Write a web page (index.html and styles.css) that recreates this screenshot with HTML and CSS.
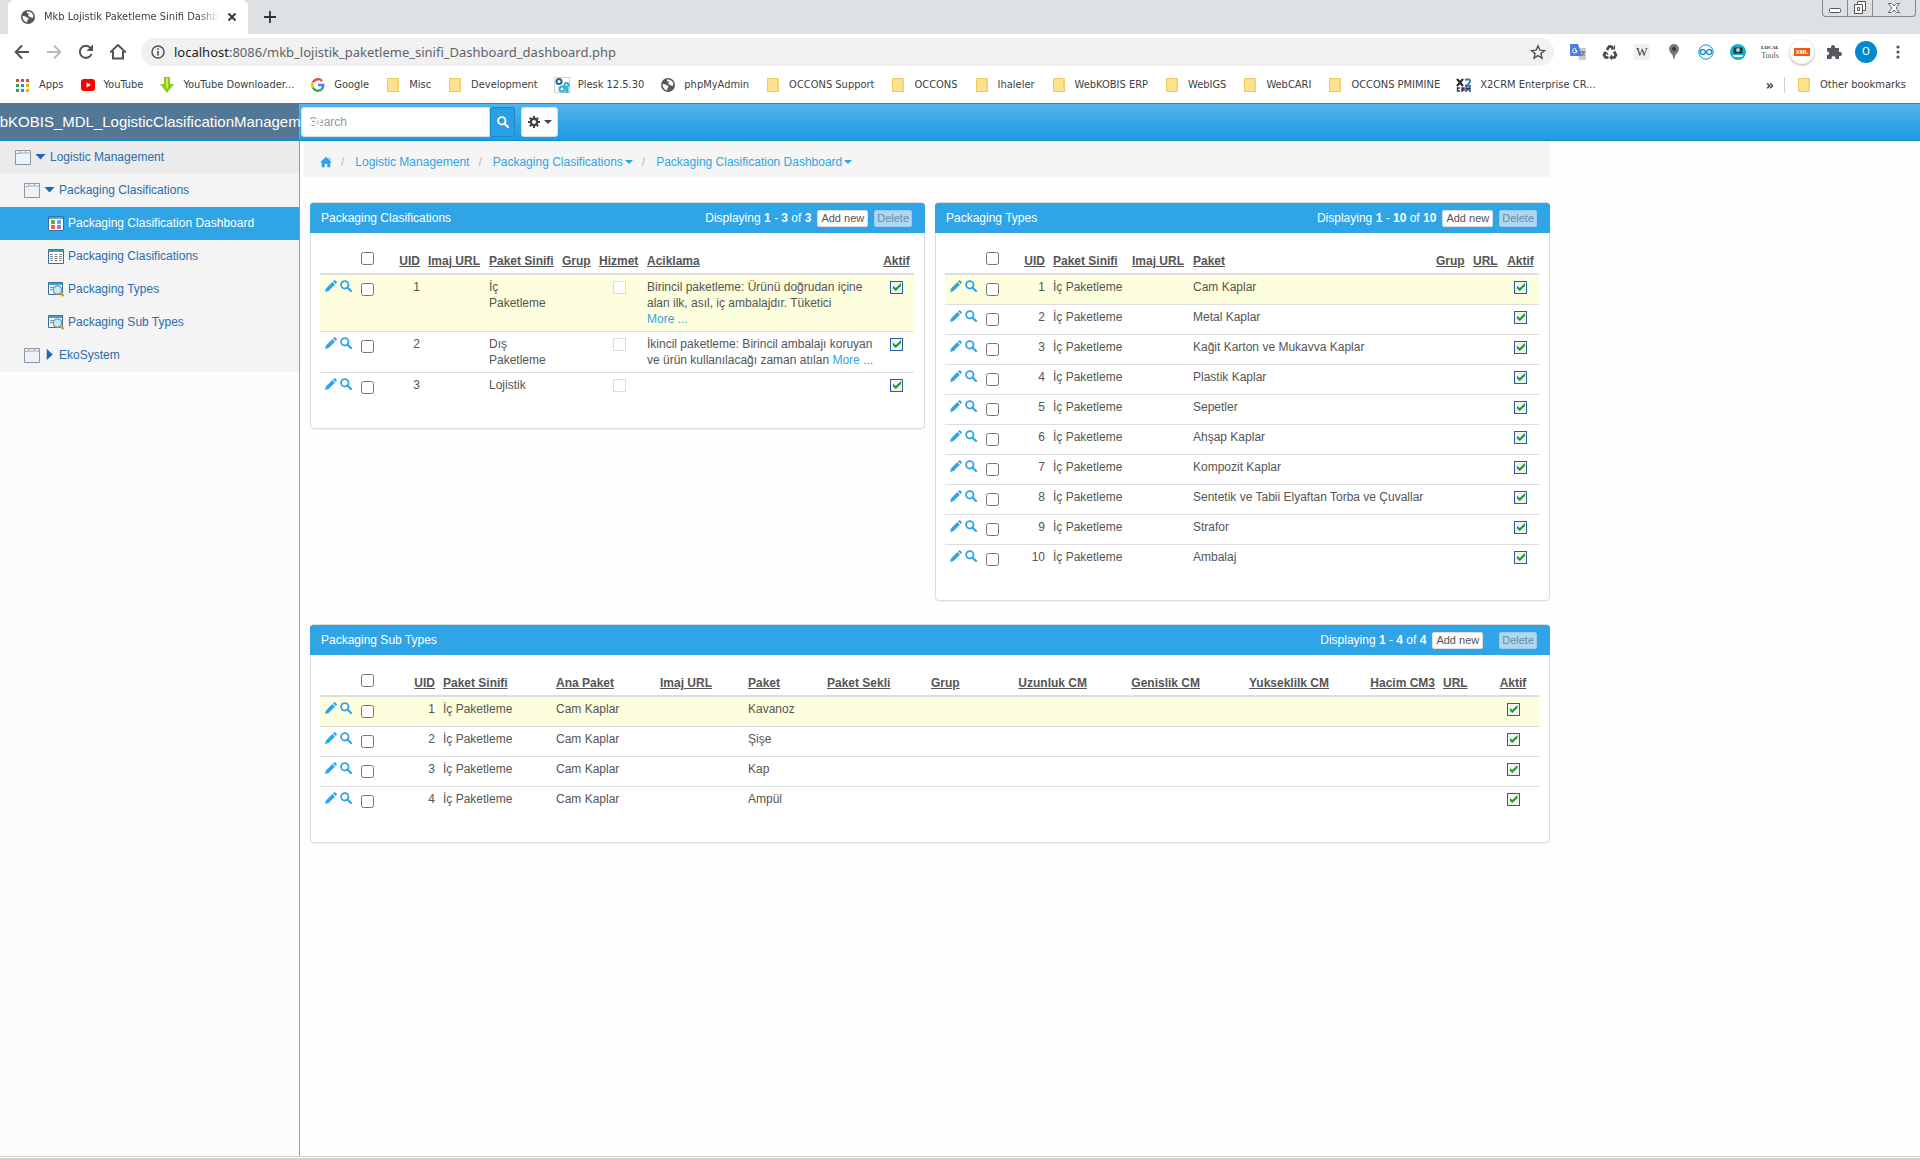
FILE: index.html
```html
<!DOCTYPE html>
<html lang="en">
<head>
<meta charset="utf-8">
<title>Mkb Lojistik Paketleme Sinifi Dashboard</title>
<link rel="stylesheet" href="styles.css">
</head>
<body>
<svg class="sprite" aria-hidden="true">
  <symbol id="pencil" viewBox="0 0 12 12"><path d="M0 12l1-3.600 6.300-6.300 2.600 2.600-6.300 6.300zM8 1.400l1-1q.6-.6 1.200 0l1.400 1.400q.6.600 0 1.200l-1 1z"/></symbol>
  <symbol id="search" viewBox="0 0 12 12"><circle cx="4.800" cy="4.800" r="3.700" fill="none" stroke="currentColor" stroke-width="1.800"/><path d="M7.500 7.500L11 11" stroke="currentColor" stroke-width="2.200" stroke-linecap="round"/></symbol>
  <symbol id="folder" viewBox="0 0 16 16"><path d="M2 1h12v14H2z" fill="#fbe38e"/><path d="M2.500 1.500h11v13h-11z" fill="none" stroke="#ecca62"/><path d="M12 1v10l2 3V1z" fill="#f3d269"/></symbol>
  <symbol id="globe" viewBox="0 0 16 16"><circle cx="8" cy="8" r="7" fill="#55585c"/><path d="M2.500 7q3-.5 4.500 1.500l1.500.5q.5 1-1 2l-.5 2.500Q2.500 12 2.500 7zM7 2.500q5-.5 6.500 4.500l-1 2-2.500-1-2-1.500 1.500-2H7z" fill="#fff"/></symbol>
  <symbol id="page" viewBox="0 0 16 16"><path d="M.5 1.500h15v14H.5z" fill="#edf2f7" stroke="#8b95a3"/><path d="M4.500 1v3h11M10.500 1v3M0 4.500h4.500" fill="none" stroke="#a3acb8"/></symbol>
  <symbol id="dash" viewBox="0 0 16 16"><path d="M.5 1.500h15v14H.5z" fill="#fff" stroke="#396f9c"/><path d="M1 2h14v2H1z" fill="#5ba3d5"/><path d="M3 5h4v4H3z" fill="#7aa82c"/><path d="M9 5h4v4H9z" fill="#69a7d8"/><path d="M3 10h4v4H3z" fill="#e8663c"/><path d="M9 10h4v4H9z" fill="#a677cf"/></symbol>
  <symbol id="grid" viewBox="0 0 16 16"><path d="M.5 1.500h15v14H.5z" fill="#fff" stroke="#396f9c"/><path d="M1 2h14v2H1z" fill="#45a0cd"/><path d="M2 6.500h3m1.500 0h3m1.500 0h3M2 8.500h3m1.500 0h3m1.500 0h3M2 10.500h3m1.500 0h3m1.500 0h3M2 12.500h3m1.500 0h3m1.500 0h3" stroke="#8a8f94"/></symbol>
  <symbol id="lens" viewBox="0 0 16 16"><path d="M.5 1.500h14v12H.5z" fill="#f2f5f7" stroke="#396f9c"/><path d="M1 2h13v2H1z" fill="#45a0cd"/><path d="M2 6.500h4M2 8.500h3" stroke="#8a8f94"/><circle cx="9.500" cy="9" r="4.200" fill="#c4e9f4" stroke="#7f99a8" stroke-width="1.200"/><path d="M13 12.500l2.500 2.500" stroke="#e39a24" stroke-width="2.500"/></symbol>
</svg>

<header class="browser">
  <div class="tabs">
    <div class="tab"><svg class="i16"><use href="#globe"/></svg><span class="tab-title">Mkb Lojistik Paketleme Sinifi Dashboard</span>
      <button class="bare" aria-label="Close tab"><svg width="10" height="10" viewBox="0 0 10 10"><path d="M1.500 1.500l7 7m0-7l-7 7" stroke="#333" stroke-width="1.800"/></svg></button></div>
    <button class="bare plus" aria-label="New tab"><svg width="12" height="12" viewBox="0 0 12 12"><path d="M6 0v12M0 6h12" stroke="#333" stroke-width="1.800"/></svg></button>
    <div class="win">
      <button aria-label="Minimize"><svg width="14" height="14" viewBox="0 0 14 14"><rect x="1.500" y="7.500" width="11" height="4" rx="1" fill="#fff" stroke="#555"/></svg></button>
      <button aria-label="Restore"><svg width="14" height="14" viewBox="0 0 14 14" fill="#fff" stroke="#555"><path d="M4.500.5h8v9h-8z"/><path d="M1.500 3.500h8v9h-8zM4.500 6.500h2v3h-2z"/></svg></button>
      <button class="wide" aria-label="Close"><svg width="14" height="14" viewBox="0 0 14 14"><path d="M1.500 2.500h3L7 5l2.500-2.500h3L9 7l3.500 4.500h-3L7 9l-2.500 2.500h-3L5 7z" fill="#fff" stroke="#666"/></svg></button>
    </div>
  </div>
  <div class="toolbar">
    <nav class="navbtns">
      <button class="bare" aria-label="Back"><svg width="16" height="16" viewBox="0 0 16 16" fill="none" stroke="#505357" stroke-width="2"><path d="M15 8H2m6-6.500L1.700 8 8 14.500"/></svg></button>
      <button class="bare" aria-label="Forward"><svg width="16" height="16" viewBox="0 0 16 16" fill="none" stroke="#b9bbbe" stroke-width="2"><path d="M1 8h13M8 1.500L14.300 8 8 14.500"/></svg></button>
      <button class="bare" aria-label="Reload"><svg width="16" height="16" viewBox="0 0 16 16"><path d="M13.500 10A6 6 0 1 1 12.500 4" fill="none" stroke="#505357" stroke-width="2"/><path d="M15 .5V7H8.500z" fill="#505357"/></svg></button>
      <button class="bare" aria-label="Home"><svg width="16" height="16" viewBox="0 0 16 16" fill="none" stroke="#505357" stroke-width="2"><path d="M0 8.500L8 1l8 7.500M3 7v7.500h10V7"/></svg></button>
    </nav>
    <div class="omnibox">
      <svg width="14" height="14" viewBox="0 0 14 14"><circle cx="7" cy="7" r="6" fill="none" stroke="#505357" stroke-width="1.500"/><path d="M7 6v4.500M7 3.300v1.500" stroke="#505357" stroke-width="1.600"/></svg>
      <span class="url"><b>localhost</b>:8086/mkb_lojistik_paketleme_sinifi_Dashboard_dashboard.php</span>
      <button class="bare" aria-label="Bookmark"><svg width="16" height="16" viewBox="0 0 16 16"><path d="M8 1.800l1.800 4.300 4.700.4-3.600 3.100 1.100 4.600L8 11.700l-4 2.500 1.100-4.600L1.500 6.500l4.700-.4z" fill="none" stroke="#505357" stroke-width="1.400"/></svg></button>
    </div>
    <div class="exts">
      <svg class="i16" viewBox="0 0 16 16"><path d="M7 4h9v12H9z" fill="#c8cbce"/><path d="M0 0h8l4 12H1q-1 0-1-1z" fill="#4b7fe6"/><path d="M7 7a2.200 2.200 0 1 1-.8-2M5 6.500h2.200" fill="none" stroke="#fff"/><path d="M10 8h5m-2.500-1v1q1 3 2 4m0-4q-1 3-3 4" stroke="#6c7076" fill="none"/></svg>
      <svg class="i16" viewBox="0 0 16 16" fill="none" stroke="#44484c" stroke-width="2.600"><path d="M5 6l2-3.500h2.500L11 5M12 7.500l2 3.500-1.500 2.500H9M6.500 13.500h-3L2 11l2-3"/><path d="M9 5h3.500V1.500M10 11l-2 2.500 2 2M1.500 8.500h3L6 11" stroke-width="1.200"/></svg>
      <span class="ext-w">W</span>
      <svg class="i16" viewBox="0 0 16 16"><path d="M8 0a5 5 0 0 1 5 5q0 3-3.500 6L8 16l-1.500-5Q3 8 3 5a5 5 0 0 1 5-5z" fill="#777"/><circle cx="8" cy="5" r="2" fill="#333"/></svg>
      <svg class="i16" viewBox="0 0 16 16" fill="none" stroke="#1992d4"><circle cx="8" cy="8" r="7.200"/><path d="M8 8Q6 5.500 4.800 5.500a2.500 2.500 0 0 0 0 5Q6 10.500 8 8t3.200-2.500a2.500 2.500 0 0 1 0 5Q10 10.500 8 8z" stroke-width="1.600"/></svg>
      <svg class="i16" viewBox="0 0 16 16"><circle cx="8" cy="8" r="8" fill="#1cb0c8"/><path d="M3.500 3.500h9v6h-9z" fill="#233"/><circle cx="8" cy="6" r="2" fill="#8fe3ee"/><path d="M3 11h10l-1 2H4z" fill="#fff"/></svg>
      <span class="ext-tools"><b>LOCAL</b><i>Tools</i></span>
      <span class="ext-xml"><b>XML</b></span>
      <svg class="i16" viewBox="0 0 16 16"><path d="M1 4h4V3a2 2 0 0 1 4 0v1h4v4h1a2 2 0 0 1 0 4h-1v3H9.500v-1a2 2 0 0 0-4 0v1H1v-4h1a2 2 0 0 0 0-3.500H1z" fill="#55585c"/></svg>
      <span class="avatar">O</span>
      <svg class="i16" viewBox="0 0 16 16" fill="#505357"><circle cx="8" cy="3" r="1.600"/><circle cx="8" cy="8" r="1.600"/><circle cx="8" cy="13" r="1.600"/></svg>
    </div>
  </div>
  <nav class="bookmarks">
    <a href="#"><svg class="i16" viewBox="0 0 16 16"><path d="M1 2h3v3H1zm5 0h3v3H6zm5 0h3v3h-3z" fill="#e0483c"/><path d="M1 7h3v3H1z" fill="#34a35a"/><path d="M6 7h3v3H6zm0 5h3v3H6z" fill="#3f7fe6"/><path d="M11 7h3v3h-3zm0 5h3v3h-3z" fill="#f3b30c"/><path d="M1 12h3v3H1z" fill="#34a35a"/></svg>Apps</a>
    <a href="#"><svg class="i16" viewBox="0 0 16 16"><rect x="1" y="2" width="14" height="12" rx="3" fill="#f00"/><path d="M6.500 5.500v5L11 8z" fill="#fff"/></svg>YouTube</a>
    <a href="#"><svg class="i16" viewBox="0 0 16 16"><path d="M5 0h6v7h4l-7 9-7-9h4z" fill="#8ccb1c"/><path d="M7 1h2v9l-1 2-1-2z" fill="#c3ea5a"/></svg>YouTube Downloader...</a>
    <a href="#"><svg class="i16" viewBox="0 0 16 16" fill="none" stroke-width="2.400"><path d="M3 5.200A5.500 5.500 0 0 1 12 4" stroke="#e94335"/><path d="M3 5.200a5.500 5.500 0 0 0 0 5.600" stroke="#fabb05"/><path d="M3 10.800a5.500 5.500 0 0 0 8.500 1.500" stroke="#34a853"/><path d="M11.500 12.300A5 5 0 0 0 13.300 8H8" stroke="#4285f4"/></svg>Google</a>
    <a href="#"><svg class="i16"><use href="#folder"/></svg>Misc</a>
    <a href="#"><svg class="i16"><use href="#folder"/></svg>Development</a>
    <a href="#"><svg class="i16" viewBox="0 0 16 16"><path d="M.5.500h15v15H.5z" fill="#fff" stroke="#ccd"/><circle cx="5" cy="4.500" r="2.500" fill="none" stroke="#176f94" stroke-width="2"/><circle cx="8" cy="12" r="2.500" fill="none" stroke="#35acd6" stroke-width="2"/><circle cx="12.500" cy="8" r="2" fill="none" stroke="#35acd6" stroke-width="2"/><path d="M13 11v5" stroke="#35acd6" stroke-width="3"/></svg>Plesk 12.5.30</a>
    <a href="#"><svg class="i16"><use href="#globe"/></svg>phpMyAdmin</a>
    <a href="#"><svg class="i16"><use href="#folder"/></svg>OCCONS Support</a>
    <a href="#"><svg class="i16"><use href="#folder"/></svg>OCCONS</a>
    <a href="#"><svg class="i16"><use href="#folder"/></svg>Ihaleler</a>
    <a href="#"><svg class="i16"><use href="#folder"/></svg>WebKOBIS ERP</a>
    <a href="#"><svg class="i16"><use href="#folder"/></svg>WebIGS</a>
    <a href="#"><svg class="i16"><use href="#folder"/></svg>WebCARI</a>
    <a href="#"><svg class="i16"><use href="#folder"/></svg>OCCONS PMIMINE</a>
    <a href="#"><svg class="i16" viewBox="0 0 16 16" fill="none"><path d="M1 2l6 7m0-7L1 9" stroke="#223" stroke-width="2"/><path d="M9 3q5-2 5 1t-5 5h6" stroke="#3b7fae" stroke-width="2"/><path d="M4 11H1.500v3H4M6 15v-4h2v2H6m4 2v-4h1l1 2 1-2h1v4" stroke="#334" stroke-width="1.400"/></svg>X2CRM Enterprise CR...</a>
    <span class="more">»</span>
    <a href="#" class="other"><svg class="i16"><use href="#folder"/></svg>Other bookmarks</a>
  </nav>
</header>

<header class="navbar">
  <a class="brand" href="#">WebKOBIS_MDL_LogisticClasificationManagement</a>
  <form class="find">
    <input type="text" placeholder="Search" aria-label="Search">
    <button type="button" class="go" aria-label="Search"><svg width="12" height="12"><use href="#search"/></svg></button>
    <button type="button" class="gear" aria-label="Settings"><svg width="12" height="12" viewBox="0 0 12 12"><circle cx="6" cy="6" r="3.200" fill="none" stroke="#444" stroke-width="2.400"/><path d="M6 0v2.500M6 9.500V12M0 6h2.500M9.500 6H12M1.800 1.800l1.700 1.700M8.500 8.500l1.700 1.700M10.200 1.800L8.500 3.500M3.500 8.500l-1.700 1.700" stroke="#444" stroke-width="2"/></svg><span class="caret"></span></button>
  </form>
</header>

<div class="app">
  <nav class="sidebar">
    <a href="#" class="top"><svg class="i16"><use href="#page"/></svg><span class="tri"></span>Logistic Management</a>
    <a href="#" class="sub"><svg class="i16"><use href="#page"/></svg><span class="tri"></span>Packaging Clasifications</a>
    <a href="#" class="leaf active"><svg class="i16"><use href="#dash"/></svg>Packaging Clasification Dashboard</a>
    <a href="#" class="leaf"><svg class="i16"><use href="#grid"/></svg>Packaging Clasifications</a>
    <a href="#" class="leaf"><svg class="i16"><use href="#lens"/></svg>Packaging Types</a>
    <a href="#" class="leaf"><svg class="i16"><use href="#lens"/></svg>Packaging Sub Types</a>
    <a href="#" class="sub"><svg class="i16"><use href="#page"/></svg><span class="tri closed"></span>EkoSystem</a>
  </nav>

  <main class="main">
    <nav class="crumbs">
      <a href="#" aria-label="Home"><svg width="12" height="12" viewBox="0 0 14 12"><path d="M7 0l7 6.500h-2V12H8.500V8h-3v4H2V6.500H0zM10 1h2v3z"/></svg></a><span>/</span>
      <a href="#">Logistic Management</a><span>/</span>
      <a href="#">Packaging Clasifications<i class="caret"></i></a><span>/</span>
      <a href="#">Packaging Clasification Dashboard<i class="caret"></i></a>
    </nav>

    <div class="panels">
      <section class="panel">
        <div class="head"><h2>Packaging Clasifications</h2><span>Displaying <b>1</b> - <b>3</b> of <b>3</b></span><button>Add new</button><button disabled>Delete</button></div>
        <table>
          <colgroup><col class="w37"><col class="w21"><col class="w46"><col class="w61"><col class="w73"><col class="w37"><col class="w48"><col><col class="w35"></colgroup>
          <thead><tr><th></th><th><input type="checkbox" aria-label="Select all"></th><th class="r"><a href="#">UID</a></th><th><a href="#">Imaj URL</a></th><th><a href="#">Paket Sinifi</a></th><th><a href="#">Grup</a></th><th><a href="#">Hizmet</a></th><th><a href="#">Aciklama</a></th><th class="c"><a href="#">Aktif</a></th></tr></thead>
          <tbody>
            <tr><td class="act"><a href="#" aria-label="Edit"><svg><use href="#pencil"/></svg></a><a href="#" aria-label="View"><svg><use href="#search"/></svg></a></td><td><input type="checkbox" aria-label="Select 1"></td><td class="r">1</td><td></td><td>İç Paketleme</td><td></td><td class="c"><input type="checkbox" class="flag" disabled aria-label="Hizmet"></td><td class="tight">Birincil paketleme: Ürünü doğrudan içine alan ilk, asıl, iç ambalajdır. Tüketici<br><a href="#">More ...</a></td><td class="c"><input type="checkbox" class="flag" checked disabled aria-label="Aktif"></td></tr>
            <tr><td class="act"><a href="#" aria-label="Edit"><svg><use href="#pencil"/></svg></a><a href="#" aria-label="View"><svg><use href="#search"/></svg></a></td><td><input type="checkbox" aria-label="Select 2"></td><td class="r">2</td><td></td><td>Dış Paketleme</td><td></td><td class="c"><input type="checkbox" class="flag" disabled aria-label="Hizmet"></td><td class="tight">İkincil paketleme: Birincil ambalajı koruyan ve ürün kullanılacağı zaman atılan <a href="#">More ...</a></td><td class="c"><input type="checkbox" class="flag" checked disabled aria-label="Aktif"></td></tr>
            <tr><td class="act"><a href="#" aria-label="Edit"><svg><use href="#pencil"/></svg></a><a href="#" aria-label="View"><svg><use href="#search"/></svg></a></td><td><input type="checkbox" aria-label="Select 3"></td><td class="r">3</td><td></td><td>Lojistik</td><td></td><td class="c"><input type="checkbox" class="flag" disabled aria-label="Hizmet"></td><td></td><td class="c"><input type="checkbox" class="flag" checked disabled aria-label="Aktif"></td></tr>
          </tbody>
        </table>
      </section>

      <section class="panel">
        <div class="head"><h2>Packaging Types</h2><span>Displaying <b>1</b> - <b>10</b> of <b>10</b></span><button>Add new</button><button disabled>Delete</button></div>
        <table>
          <colgroup><col class="w37"><col class="w21"><col class="w46"><col class="w79"><col class="w61"><col><col class="w37"><col class="w33"><col class="w37"></colgroup>
          <thead><tr><th></th><th><input type="checkbox" aria-label="Select all"></th><th class="r"><a href="#">UID</a></th><th><a href="#">Paket Sinifi</a></th><th><a href="#">Imaj URL</a></th><th><a href="#">Paket</a></th><th><a href="#">Grup</a></th><th><a href="#">URL</a></th><th class="c"><a href="#">Aktif</a></th></tr></thead>
          <tbody id="types"></tbody>
        </table>
      </section>

      <section class="panel full">
        <div class="head"><h2>Packaging Sub Types</h2><span>Displaying <b>1</b> - <b>4</b> of <b>4</b></span><button>Add new</button><button disabled class="apart">Delete</button></div>
        <table>
          <colgroup><col class="w37"><col class="w21"><col class="w61"><col class="w113"><col class="w104"><col class="w88"><col class="w79"><col class="w104"><col><col class="w121"><col class="w113"><col class="w129"><col class="w106"><col class="w48"><col class="w52"></colgroup>
          <thead><tr><th></th><th><input type="checkbox" aria-label="Select all"></th><th class="r"><a href="#">UID</a></th><th><a href="#">Paket Sinifi</a></th><th><a href="#">Ana Paket</a></th><th><a href="#">Imaj URL</a></th><th><a href="#">Paket</a></th><th><a href="#">Paket Sekli</a></th><th><a href="#">Grup</a></th><th class="r"><a href="#">Uzunluk CM</a></th><th class="r"><a href="#">Genislik CM</a></th><th class="r"><a href="#">Yukseklilk CM</a></th><th class="r"><a href="#">Hacim CM3</a></th><th><a href="#">URL</a></th><th class="c"><a href="#">Aktif</a></th></tr></thead>
          <tbody id="subtypes"></tbody>
        </table>
      </section>
    </div>
  </main>
</div>
<footer class="edge"></footer>
<script src="rows.js"></script>
</body>
</html>
```
FILE: rows.js
```js
// Fills the two regular tables: one row for each packaging type and sub type.
const lead = (n) =>
  `<td class="act"><a href="#" aria-label="Edit"><svg><use href="#pencil"/></svg></a><a href="#" aria-label="View"><svg><use href="#search"/></svg></a></td>` +
  `<td><input type="checkbox" aria-label="Select ${n}"></td><td class="r">${n}</td><td>İç Paketleme</td>`;
const active = `<td class="c"><input type="checkbox" class="flag" checked disabled aria-label="Aktif"></td>`;

const types = ["Cam Kaplar", "Metal Kaplar", "Kağit Karton ve Mukavva Kaplar", "Plastik Kaplar", "Sepetler",
  "Ahşap Kaplar", "Kompozit Kaplar", "Sentetik ve Tabii Elyaftan Torba ve Çuvallar", "Strafor", "Ambalaj"];
document.getElementById("types").innerHTML = types
  .map((t, i) => `<tr>${lead(i + 1)}<td></td><td>${t}</td><td></td><td></td>${active}</tr>`).join("");

const subtypes = ["Kavanoz", "Şişe", "Kap", "Ampül"];
document.getElementById("subtypes").innerHTML = subtypes
  .map((t, i) => `<tr>${lead(i + 1)}<td>Cam Kaplar</td><td></td><td>${t}</td>${"<td></td>".repeat(7)}${active}</tr>`).join("");
```
FILE: styles.css
```css
* { box-sizing: border-box; }
body { margin: 0; min-height: 100vh; display: flex; flex-direction: column; background: #fefefe; color: #555; font: 12px/16px "Liberation Sans", Arial, sans-serif; }
a { color: #2fa4e7; text-decoration: none; }
button, input { font-family: inherit; }
.sprite { position: absolute; width: 0; height: 0; }
.i16 { width: 16px; height: 16px; flex: none; }
.bare { border: 0; background: none; padding: 0; display: flex; align-items: center; justify-content: center; }

/* browser frame */
.browser { font-family: "DejaVu Sans Condensed", "DejaVu Sans", Tahoma, sans-serif; font-size: 11px; color: #3c4043; background: #fff; }
.tabs { display: flex; height: 34px; background: #dee1e4; padding-left: 8px; }
.tab { display: flex; align-items: center; width: 240px; padding: 0 11px 0 12px; gap: 8px; background: #fff; border-radius: 6px 6px 0 0; }
.tab-title { flex: 1; min-width: 0; overflow: hidden; white-space: nowrap; mask-image: linear-gradient(90deg, #000 88%, transparent); }
.plus { width: 44px; }
.win { margin-left: auto; margin-right: 4px; display: flex; height: 17px; border: 1px solid #85888c; border-top: 0; border-radius: 0 0 4px 4px; overflow: hidden; }
.win button { width: 25px; padding: 0; border: 0; border-right: 1px solid #85888c; background: none; line-height: 0; }
.win .wide { width: 42px; border-right: 0; }
.toolbar { display: flex; align-items: center; height: 36px; padding-right: 14px; }
.navbtns { display: flex; gap: 16px; padding: 0 15px 0 14px; }
.omnibox { flex: 1; display: flex; align-items: center; gap: 9px; height: 28px; padding: 0 8px 0 10px; border-radius: 14px; background: #f1f1f2; color: #5f6368; }
.url { flex: 1; min-width: 0; overflow: hidden; white-space: nowrap; font-size: 13px; font-family: "Noto Sans", sans-serif; }
.url b { font-weight: 400; color: #222; }
.exts { display: flex; align-items: center; justify-content: space-between; gap: 8px; width: 352px; padding-left: 16px; }
.ext-w { width: 16px; height: 16px; background: #f0f0f0; color: #333; font: 12px/16px "Liberation Serif", serif; text-align: center; }
.ext-tools { width: 16px; display: flex; flex-direction: column; align-items: center; font: 8px/8px "Liberation Serif", serif; color: #555; }
.ext-tools b { color: #111; font-size: 5px; }
.ext-tools i { font-style: normal; }
.ext-xml { width: 24px; height: 24px; margin: 0 -4px; border-radius: 50%; background: #fff; box-shadow: 0 1px 3px #aaa; display: flex; align-items: center; justify-content: center; }
.ext-xml b { width: 16px; background: #ee5a10; color: #fff; font: bold 6px/8px "Liberation Sans", sans-serif; text-align: center; }
.avatar { width: 22px; height: 22px; margin: 0 -3px; border-radius: 50%; background: #0488d0; color: #fff; text-align: center; line-height: 22px; }
.bookmarks { display: flex; align-items: center; height: 33px; padding: 0 14px 4px 15px; gap: 16px; }
.bookmarks a { display: flex; align-items: center; gap: 8px; color: #3c4043; white-space: nowrap; }
.more { margin-left: auto; font-size: 14px; font-weight: 700; }
.bookmarks .other { border-left: 1px solid #d0d0d0; padding-left: 11px; margin-left: -6px; }

/* application bar */
.navbar { display: flex; height: 38px; border: solid #178acc; border-width: 1px 0; background: linear-gradient(#54b4eb, #2fa4e7 60%, #1d9ce5); }
.brand { flex: none; width: 300px; display: flex; align-items: center; justify-content: center; background: #527896; border-right: 1px solid #999; color: #fff; font-size: 15px; white-space: nowrap; z-index: 1; }
.find { display: flex; align-items: center; padding-left: 1px; }
.find input { width: 189px; height: 30px; padding: 0 7px; border: 1px solid #ddd; border-radius: 3px 0 0 3px; background: #fff; font-size: 12px; }
.find input::placeholder { color: #999; }
.find button { height: 30px; padding: 0; display: flex; align-items: center; justify-content: center; gap: 4px; border-radius: 3px; }
.find .go { width: 25px; border: 1px solid #178acc; background: #2b9fe3; color: #fff; }
.find .gear { width: 37px; margin-left: 6px; border: 1px solid #ddd; background: #fff; color: #444; }
.caret { border: 4px solid transparent; border-top-color: currentColor; border-bottom: 0; display: inline-block; }

.app { flex: 1; display: flex; }
.sidebar { width: 300px; flex: none; border-right: 1px solid #999; background: #fcfcfc; }
.sidebar a { display: flex; align-items: center; height: 33px; padding-bottom: 2px; gap: 4px; background: #f4f4f4; color: #2a6cae; }
.sidebar .top { padding-left: 15px; background: #ebebeb; }
.sidebar .sub { padding-left: 24px; }
.sidebar .leaf { padding-left: 48px; }
.sidebar .active { background: #2fa4e7; color: #fff; }
.tri { width: 11px; height: 6px; background: #1c69b0; clip-path: polygon(0 0, 100% 0, 50% 100%); }
.tri.closed { height: 11px; clip-path: polygon(25% 0, 80% 50%, 25% 100%); }

.main { flex: 1; min-width: 0; max-width: 1250px; }
.crumbs { display: flex; align-items: center; height: 36px; margin-left: 4px; padding: 6px 16px 0; background: #f5f5f5; }
.crumbs span { margin: 0 11px 0 9px; color: #bbb; }
.crumbs svg { display: block; fill: #2fa4e7; }
.crumbs .caret { margin-left: 2px; vertical-align: 2px; }

.panels { display: grid; grid-template-columns: 1fr 1fr; gap: 23px 10px; align-items: start; padding: 25px 0 24px 10px; }
.panel { border: 1px solid #ddd; border-radius: 4px; background: #fff; padding-bottom: 26px; box-shadow: 0 1px 1px #0000000d; min-width: 0; }
.full { grid-column: 1 / -1; }
.head { display: flex; align-items: center; height: 30px; margin: 0 -1px 10px; padding: 0 13px 0 11px; border-radius: 3px 3px 0 0; background: #2fa4e7; color: #fff; }
.head h2 { flex: 1; margin: 0; font-size: 12px; font-weight: 400; }
.head button { height: 17px; margin-left: 6px; padding: 0 3px; border: 1px solid #ddd; border-radius: 2px; background: #fff; color: #555; font-size: 11px; line-height: 15px; }
.head button:disabled { padding: 0 2px; border-color: #9ccdee; background: #acd8f4; color: #6c8ba0; }
.head .apart { margin-left: 16px; }

table { width: calc(100% - 19px); margin-left: 9px; table-layout: fixed; border-collapse: separate; border-spacing: 0; }
th, td { padding: 4px; vertical-align: top; text-align: left; }
th { height: 32px; vertical-align: bottom; border-bottom: 2px solid #ddd; white-space: nowrap; }
th a { color: #555; text-decoration: underline; }
td { height: 30px; border-top: 1px solid #ddd; }
tbody tr:first-child td { height: 29px; border-top: 0; background: #fcfedd; }
td.tight { padding-right: 2px; }
.r { text-align: right; }
.c { text-align: center; }
.act { padding: 5px 0 0 5px; white-space: nowrap; line-height: 0; }
.act a { margin-right: 3px; }
.act svg { width: 12px; height: 12px; fill: currentColor; }
input[type=checkbox] { display: block; width: 13px; height: 13px; margin: 4px 0 0; }
th input[type=checkbox] { margin: 0 0 4px; }
input.flag[type=checkbox] { appearance: none; margin: 2px auto 0; border: 1px solid #ddd; background: #fff; }
input.flag[type=checkbox]:checked { border-color: #2a5f9e; background: #f2f2f4; }
input.flag:checked::before { content: ""; display: block; width: 8px; height: 8px; margin: 1px 0 0 2px; background: #1f9a2b; clip-path: polygon(0 35%, 35% 62%, 100% 0, 100% 38%, 35% 100%, 0 70%); }
.w21 { width: 21px; } .w33 { width: 33px; } .w35 { width: 35px; } .w37 { width: 37px; } .w46 { width: 46px; }
.w48 { width: 48px; } .w52 { width: 52px; } .w61 { width: 61px; } .w73 { width: 73px; } .w79 { width: 79px; }
.w88 { width: 88px; } .w104 { width: 104px; } .w106 { width: 106px; } .w113 { width: 113px; } .w121 { width: 121px; } .w129 { width: 129px; }

.edge { height: 4px; border-top: 1px solid #cfcfc6; border-bottom: 2px solid #cfd0c8; background: #fff; }
```
